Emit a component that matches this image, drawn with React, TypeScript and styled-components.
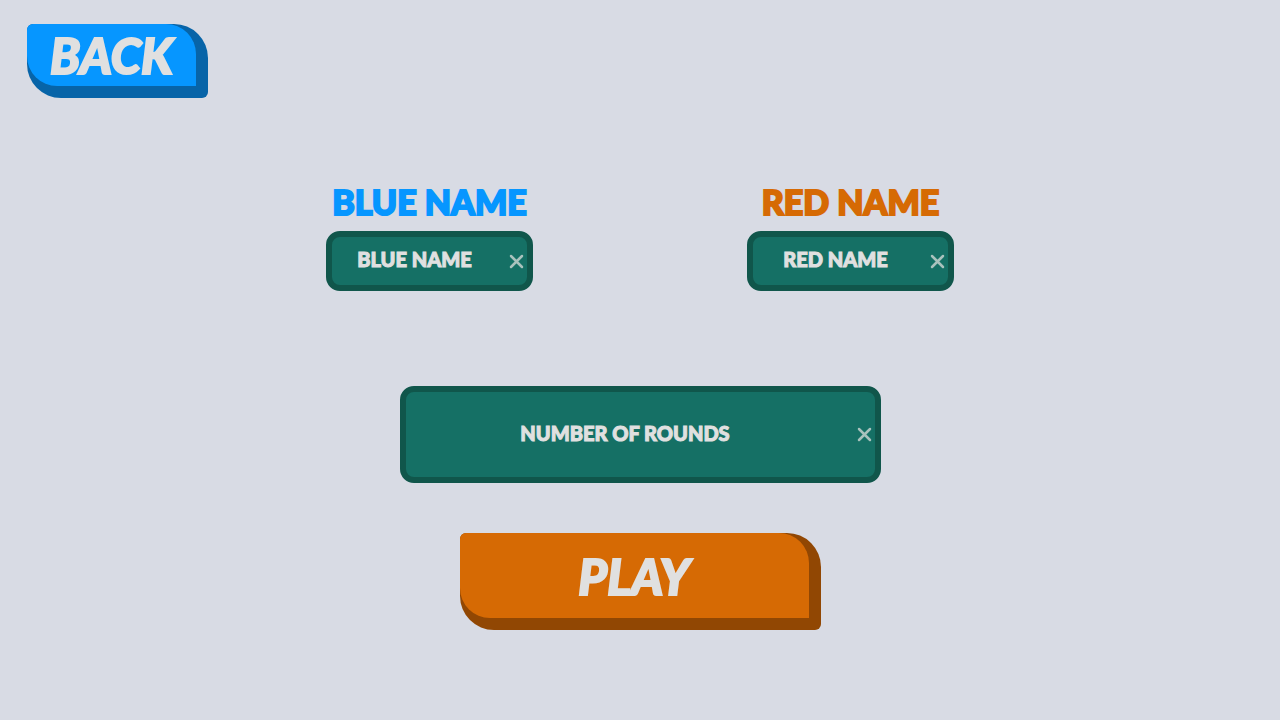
import React, { useRef } from "react";
import styled, { createGlobalStyle } from "styled-components";

const GlobalStyle = createGlobalStyle`
  *, *::before, *::after { box-sizing: border-box; }
  body {
    margin: 0;
    background: #d8dbe4;
    font-family: Lato, "Liberation Sans", sans-serif;
    font-weight: 900;
  }
`;

const Page = styled.main`
  display: flex;
  flex-direction: column;
  min-height: 100vh;
`;

const TopBar = styled.header`
  padding: 24px 27px 0;
`;

const Form = styled.form`
  display: flex;
  flex-direction: column;
  align-items: center;
  padding: 83px 24px 48px;
`;

const Names = styled.div`
  display: flex;
  flex-wrap: wrap;
  justify-content: center;
  gap: 24px 214px;
  margin-bottom: 95px;
`;

const Player = styled.div`
  display: flex;
  flex-direction: column;
  align-items: center;
  width: 207px;
`;

const PlayerLabel = styled.label<{ $color: string }>`
  height: 50px;
  line-height: 42px;
  font-size: 34px;
  white-space: nowrap;
  color: ${(p) => p.$color};
  -webkit-text-stroke: 2px ${(p) => p.$color};
`;

const FieldBox = styled.div<{ $large?: boolean }>`
  display: flex;
  align-items: center;
  width: ${(p) => (p.$large ? "481px" : "100%")};
  max-width: 100%;
  height: ${(p) => (p.$large ? "97px" : "60px")};
  border: 6px solid #10564b;
  border-radius: 14px;
  background: #157065;
`;

const FieldInput = styled.input`
  flex: 1;
  min-width: 0;
  height: 100%;
  padding: 0 0 4px;
  border: 0;
  outline: 0;
  background: transparent;
  color: #e0e0e0;
  font: inherit;
  font-size: 20px;
  text-align: center;
  -webkit-text-stroke: 1px #e0e0e0;
`;

const ClearButton = styled.button`
  display: flex;
  align-items: center;
  justify-content: flex-end;
  width: 30px;
  height: 100%;
  padding: 0 3px 0 0;
  border: 0;
  background: transparent;
  color: #a9c2bd;
  cursor: pointer;
`;

const SlabButton = styled.button<{ $edge: string; $large?: boolean }>`
  display: flex;
  width: ${(p) => (p.$large ? "361px" : "181px")};
  max-width: 100%;
  height: ${(p) => (p.$large ? "97px" : "74px")};
  padding: 0 12px 12px 0;
  border: 0;
  border-radius: 6px 34px 6px 34px;
  background: ${(p) => p.$edge};
  color: #e0e0e0;
  font: inherit;
  font-size: 49px;
  font-style: italic;
  -webkit-text-stroke: 2px #e0e0e0;
  cursor: pointer;
`;

const SlabFace = styled.span<{ $color: string }>`
  display: flex;
  flex: 1;
  align-items: center;
  justify-content: center;
  height: 100%;
  border-radius: 6px 30px 0 30px;
  background: ${(p) => p.$color};
`;

const PlaySlot = styled.div`
  display: flex;
  justify-content: center;
  width: 100%;
  margin-top: 50px;
`;

function Field({ id, text, label, large }: { id: string; text: string; label?: string; large?: boolean }) {
  const input = useRef<HTMLInputElement>(null);
  const clear = () => {
    if (input.current) {
      input.current.value = "";
      input.current.focus();
    }
  };
  return (
    <FieldBox $large={large}>
      <FieldInput ref={input} id={id} defaultValue={text} aria-label={label} />
      <ClearButton type="button" aria-label="Clear" onClick={clear}>
        <svg width="15" height="15" viewBox="0 0 15 15" fill="none" stroke="currentColor" strokeWidth="2.5" strokeLinecap="round">
          <path d="M2 2L13 13M13 2L2 13" />
        </svg>
      </ClearButton>
    </FieldBox>
  );
}

export default function App() {
  return (
    <Page>
      <GlobalStyle />
      <TopBar>
        <SlabButton type="button" $edge="#0764a8">
          <SlabFace $color="#0696ff">BACK</SlabFace>
        </SlabButton>
      </TopBar>
      <Form onSubmit={(e) => e.preventDefault()}>
        <Names>
          <Player>
            <PlayerLabel htmlFor="blue" $color="#0696ff">BLUE NAME</PlayerLabel>
            <Field id="blue" text="BLUE NAME" />
          </Player>
          <Player>
            <PlayerLabel htmlFor="red" $color="#d66a04">RED NAME</PlayerLabel>
            <Field id="red" text="RED NAME" />
          </Player>
        </Names>
        <Field id="rounds" text="NUMBER OF ROUNDS" label="Number of rounds" large />
        <PlaySlot>
          <SlabButton type="submit" $edge="#914703" $large>
            <SlabFace $color="#d66a04">PLAY</SlabFace>
          </SlabButton>
        </PlaySlot>
      </Form>
    </Page>
  );
}
